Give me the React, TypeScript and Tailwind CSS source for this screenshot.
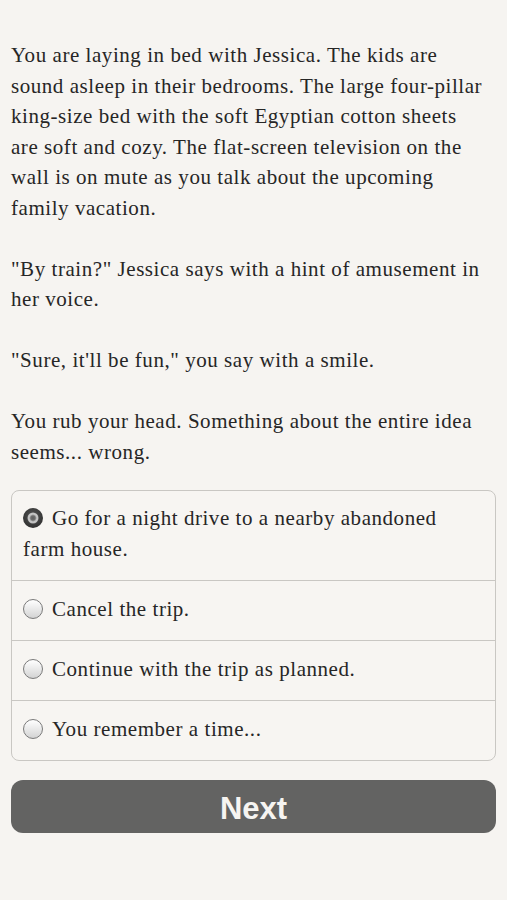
import React from "react";

const paragraphs: React.ReactNode[] = [
  <>
    You are laying in bed with Jessica. The kids are sound asleep in their bedrooms. The large four-pillar
    king-size bed with the soft Egyptian cotton sheets
    <br />
    are soft and cozy. The flat-screen television on the wall is on mute as you talk about the upcoming
    family vacation.
  </>,
  "\"By train?\" Jessica says with a hint of amusement in her voice.",
  "\"Sure, it'll be fun,\" you say with a smile.",
  "You rub your head. Something about the entire idea seems... wrong.",
];

const choices = [
  "Go for a night drive to a nearby abandoned farm house.",
  "Cancel the trip.",
  "Continue with the trip as planned.",
  "You remember a time...",
];

function Radio({ checked }: { checked: boolean }) {
  if (checked) {
    return (
      <span className="inline-block align-[-3px] mr-[9px] w-[20px] h-[20px] rounded-full bg-[radial-gradient(circle_at_50%_40%,#555,#262626)] relative">
        <span className="absolute left-1/2 top-1/2 -translate-x-1/2 -translate-y-1/2 w-[11px] h-[11px] rounded-full bg-[radial-gradient(circle,#5e5e5e_0%,#6e6e6e_28%,#c9c9c9_50%,#b5b5b5_80%,#8c8c8c_100%)]" />
      </span>
    );
  }
  return (
    <span className="inline-block align-[-3px] mr-[9px] w-[20px] h-[20px] rounded-full bg-[linear-gradient(#ffffff,#d3d3d3)] border border-[#7a7a7a]" />
  );
}

export default function App() {
  const selected = 0;
  return (
    <div className="min-h-[900px] bg-[#f6f4f1] text-[#262626] px-[11px] pt-[40px] font-['Liberation_Serif','DejaVu_Serif',serif]">
      <div className="text-[21px] leading-[30.5px] tracking-[0.55px]">
        {paragraphs.map((p, i) => (
          <p key={i} className="mb-[30.5px]">
            {p}
          </p>
        ))}
      </div>
      <div className="-mt-[8px] border border-[#c9c7c3] rounded-[8px] bg-[#f7f5f2]">
        {choices.map((c, i) => (
          <div
            key={i}
            className={`px-[11px] pt-[12.5px] pb-[16px] text-[21px] leading-[30.5px] tracking-[0.55px] ${
              i > 0 ? "border-t border-[#c9c7c3]" : ""
            }`}
          >
            <Radio checked={i === selected} />
            {c}
          </div>
        ))}
      </div>
      <button className="mt-[19px] w-full h-[53px] rounded-[12px] bg-[#636362] text-[#f6f4f1] text-[31px] leading-none pt-[3px] font-bold font-['Liberation_Sans',Arial,sans-serif]">
        Next
      </button>
    </div>
  );
}
